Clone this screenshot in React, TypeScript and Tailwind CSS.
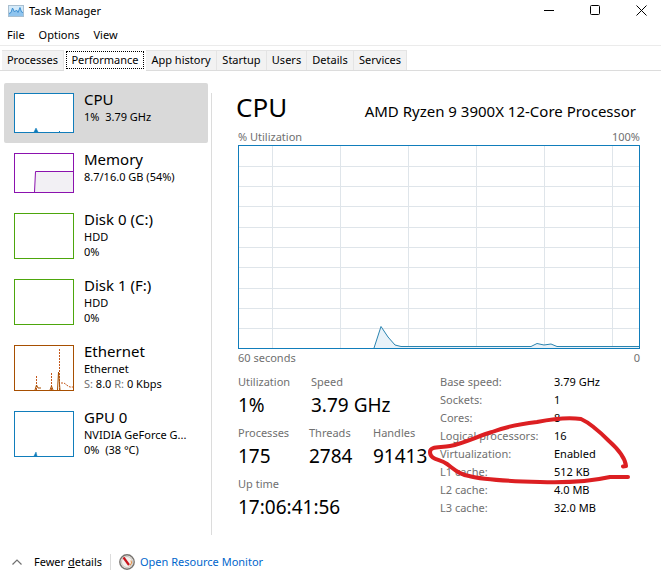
import type { ReactNode } from "react";

const tabs = [
    { name: "Processes", width: "w-[62px]" },
    { name: "Performance", width: "w-[82px]" },
    { name: "App history", width: "w-[71px]" },
    { name: "Startup", width: "w-[50px]" },
    { name: "Users", width: "w-[40px]" },
    { name: "Details", width: "w-[47px]" },
    { name: "Services", width: "w-[53px]" },
];

const details = [
    { label: "Base speed:", value: "3.79 GHz" },
    { label: "Sockets:", value: "1" },
    { label: "Cores:", value: "8" },
    { label: "Logical processors:", value: "16" },
    { label: "Virtualization:", value: "Enabled" },
    { label: "L1 cache:", value: "512 KB" },
    { label: "L2 cache:", value: "4.0 MB" },
    { label: "L3 cache:", value: "32.0 MB" },
];

type DeviceProps = {
    name: string;
    graph: ReactNode;
    border: string;
    tall?: boolean;
    selected?: boolean;
    children: ReactNode;
};

function Device({ name, graph, border, tall, selected, children }: DeviceProps) {
    return (
        <button
            type="button"
            className={`flex w-full items-start gap-2.5 rounded-xs pt-2.5 pl-2.5 text-left ${
                tall ? "h-[66px]" : "h-[60px]"
            } ${selected ? "bg-[#d9d9d9]" : ""}`}
        >
            <span
                className={`block w-[60px] shrink-0 border bg-white ${border} ${
                    tall ? "h-[46px]" : "h-10"
                }`}
            >
                {graph}
            </span>
            <span className="-mt-[3px] block min-w-0 text-[11px] leading-[15px]">
                <span className="block text-[15px] leading-[19px]">{name}</span>
                {children}
            </span>
        </button>
    );
}

function Stat({ label, value }: { label: string; value: string }) {
    return (
        <div>
            <dt className="text-[11px] leading-4 text-[#707070]">{label}</dt>
            <dd className="text-[19px] leading-[30px]">{value}</dd>
        </div>
    );
}

function AppIcon() {
    return (
        <svg width="16" height="12" viewBox="0 0 16 12">
            <rect x="0.5" y="0.5" width="15" height="11" fill="#d3eafa" stroke="#a9bfd0" />
            <path d="M1 8.500 3 7.500 4.500 3 6.500 7 8.500 5 10 7.500 12 2.500 13.500 7 15 7.500V11H1Z" fill="#8fc4ee" />
            <path d="M1 8.500 3 7.500 4.500 3 6.500 7 8.500 5 10 7.500 12 2.500 13.500 7 15 7.500" fill="none" stroke="#3d8fd1" />
        </svg>
    );
}

function UtilizationGraph() {
    return (
        <svg
            className="block h-[204px] w-full"
            viewBox="0 0 402 204"
            preserveAspectRatio="none"
            role="img"
            aria-label="CPU utilization"
        >
            <g stroke="#dfe5ea" shapeRendering="crispEdges">
                {[34, 102, 170, 238, 306, 374].map((x) => (
                    <path key={x} d={`M${x + 0.5} 0V204`} />
                ))}
                {[21, 41, 61, 82, 102, 122, 143, 163, 183].map((y) => (
                    <path key={y} d={`M0 ${y + 0.5}H402`} />
                ))}
            </g>
            <path
                d="M136 203 143 181.500 150 192 157 200 163 201.500H293L299 198.500 306 200 313 199 319 201.500H402V204H136Z"
                fill="#e8f2f9"
                stroke="#2a84b0"
            />
            <rect x="0.5" y="0.5" width="401" height="203" fill="none" stroke="#117dbb" />
        </svg>
    );
}

export default function App() {
    return (
        <div className="flex min-h-screen flex-col bg-white font-['Noto_Sans','Open_Sans',sans-serif] text-black">
            <header className="flex h-[26px] items-start justify-between">
                <h1 className="flex items-center gap-[5px] pl-2 text-[11px] leading-[21px]">
                    <AppIcon />
                    Task Manager
                </h1>
                <div className="flex">
                    <button type="button" aria-label="Minimize" className="flex h-5 w-[46px] items-center justify-center">
                        <svg width="11" height="11" viewBox="0 0 11 11">
                            <path d="M0 5.500H10" stroke="#000" />
                        </svg>
                    </button>
                    <button type="button" aria-label="Maximize" className="flex h-5 w-[46px] items-center justify-center">
                        <svg width="10" height="10" viewBox="0 0 10 10">
                            <rect x="0.5" y="0.5" width="9" height="9" rx="1" fill="none" stroke="#000" />
                        </svg>
                    </button>
                    <button type="button" aria-label="Close" className="flex h-5 w-[43px] items-center justify-center pl-1">
                        <svg width="11" height="11" viewBox="0 0 11 11">
                            <path d="M0.500 0.500 10.500 10.500M10.500 0.500 0.500 10.500" stroke="#000" />
                        </svg>
                    </button>
                </div>
            </header>

            <nav className="flex h-5 items-center gap-3.5 border-b border-[#ebebeb] pl-[7px] text-[11px]">
                <button type="button">File</button>
                <button type="button">Options</button>
                <button type="button">View</button>
            </nav>

            <div role="tablist" className="flex h-[25px] items-end border-b border-[#dcdcdc] pl-0.5">
                {tabs.map((tab) =>
                    tab.name === "Performance" ? (
                        <button
                            key={tab.name}
                            type="button"
                            role="tab"
                            aria-selected="true"
                            className={`-mb-px h-[23px] bg-white p-0.5 text-[11px] ${tab.width}`}
                        >
                            <span className="block border border-dotted border-black leading-4">{tab.name}</span>
                        </button>
                    ) : (
                        <button
                            key={tab.name}
                            type="button"
                            role="tab"
                            aria-selected="false"
                            className={`h-5 border-t border-r border-[#e4e4e4] bg-[#f2f2f2] text-[11px] whitespace-nowrap ${tab.width}`}
                        >
                            {tab.name}
                        </button>
                    ),
                )}
            </div>

            <main className="flex pt-3">
                <aside className="w-[208px] shrink-0 pl-1">
                    <Device
                        name="CPU"
                        selected
                        border="border-[#117dbb]"
                        graph={
                            <svg width="58" height="38" viewBox="0 0 58 38">
                                <path d="M19 38 21 34 23 38Z" fill="#117dbb" stroke="#117dbb" strokeWidth="0.5" />
                                <path d="M44 37.500H45" stroke="#117dbb" />
                            </svg>
                        }
                    >
                        1%&nbsp; 3.79 GHz
                    </Device>
                    <Device
                        name="Memory"
                        border="border-[#8b12ae]"
                        graph={
                            <svg width="58" height="38" viewBox="0 0 58 38">
                                <path d="M19.500 38 20.500 17.500H58V38Z" fill="#f2f0f4" />
                                <path d="M19.500 38 20.500 17.500H58" fill="none" stroke="#8b12ae" />
                            </svg>
                        }
                    >
                        8.7/16.0 GB (54%)
                    </Device>
                    <Device name="Disk 0 (C:)" tall border="border-[#4da60c]" graph={null}>
                        <span className="block">HDD</span>
                        <span className="block">0%</span>
                    </Device>
                    <Device name="Disk 1 (F:)" tall border="border-[#4da60c]" graph={null}>
                        <span className="block">HDD</span>
                        <span className="block">0%</span>
                    </Device>
                    <Device
                        name="Ethernet"
                        tall
                        border="border-[#a74f01]"
                        graph={
                            <svg width="58" height="44" viewBox="0 0 58 44" fill="none" stroke="#c4581c">
                                <path d="M21.500 44V30M36.500 44V27M44.500 44V2" strokeDasharray="2 1" />
                                <path d="M46 37H49L53 40 55 41H58" strokeDasharray="2 1" />
                                <path d="M20 44 21.500 39 23 42H26M35 44 36.500 40 38 44M42.500 44 43.500 26 45 44" stroke="#a74f01" />
                            </svg>
                        }
                    >
                        <span className="block">Ethernet</span>
                        <span className="block">
                            <span className="text-[#707070]">S:</span> 8.0 <span className="text-[#707070]">R:</span> 0 Kbps
                        </span>
                    </Device>
                    <Device
                        name="GPU 0"
                        tall
                        border="border-[#117dbb]"
                        graph={
                            <svg width="58" height="44" viewBox="0 0 58 44">
                                <path d="M19 44 21 40 22 44Z" fill="#117dbb" stroke="#117dbb" strokeWidth="0.5" />
                            </svg>
                        }
                    >
                        <span className="block">NVIDIA GeForce G...</span>
                        <span className="block">0%&nbsp; (38 °C)</span>
                    </Device>
                </aside>

                <section className="mt-2.5 ml-[3px] h-[442px] min-w-0 flex-1 border-l border-[#dcdcdc] pr-[21px] pl-[26px]">
                    <div className="flex h-[35px] items-end justify-between pr-1">
                        <h2 className="-ml-0.5 self-start text-[26px] leading-7">CPU</h2>
                        <p className="text-[15px] leading-[34px] whitespace-nowrap">AMD Ryzen 9 3900X 12-Core Processor</p>
                    </div>
                    <div className="flex justify-between text-[11px] leading-[17px] text-[#707070]">
                        <span>% Utilization</span>
                        <span>100%</span>
                    </div>
                    <UtilizationGraph />
                    <div className="flex justify-between text-[11px] leading-[18px] text-[#707070]">
                        <span>60 seconds</span>
                        <span>0</span>
                    </div>

                    <div className="flex pt-1.5">
                        <dl className="flex w-[202px] shrink-0 flex-col gap-[5px] pt-px">
                            <div className="grid grid-cols-[73px_1fr]">
                                <Stat label="Utilization" value="1%" />
                                <Stat label="Speed" value="3.79 GHz" />
                            </div>
                            <div className="grid grid-cols-[71px_64px_1fr]">
                                <Stat label="Processes" value="175" />
                                <Stat label="Threads" value="2784" />
                                <Stat label="Handles" value="91413" />
                            </div>
                            <Stat label="Up time" value="17:06:41:56" />
                        </dl>

                        <div className="relative">
                            <table className="text-left text-[11px] leading-[18px]">
                                <tbody>
                                    {details.map((row) => (
                                        <tr key={row.label}>
                                            <th scope="row" className="w-[114px] p-0 font-normal text-[#707070]">
                                                {row.label}
                                            </th>
                                            <td className="p-0 whitespace-nowrap">{row.value}</td>
                                        </tr>
                                    ))}
                                </tbody>
                            </table>
                            {/* hand-drawn marker around the virtualization row */}
                            <svg
                                className="pointer-events-none absolute top-10 -left-3.5"
                                width="206"
                                height="74"
                                viewBox="426 413 206 74"
                                fill="none"
                                stroke="#dc1f22"
                                strokeWidth="4"
                                strokeLinecap="round"
                                strokeLinejoin="round"
                            >
                                <path d="M623 466.500 626 466C625 457 618 449 609 441C600 432 590 423 581 419C567 417 552 419 537 422C520 424 505 427 492 432C478 436 465 443 450 446C440 448 430 446 430 452C430 460 440 459 447 464C454 469 458 474 469 476C480 479 505 481 540 482C570 483 592 481 610 477L628 477" />
                            </svg>
                        </div>
                    </div>
                </section>
            </main>

            <footer className="flex h-[54px] items-center pl-3 text-[11px]">
                <button type="button" className="flex items-center gap-3">
                    <svg width="10" height="6" viewBox="0 0 10 6">
                        <path d="M0.500 5.500 5 1 9.500 5.500" fill="none" stroke="#707070" strokeWidth="1.200" />
                    </svg>
                    <span>
                        Fewer <u>d</u>etails
                    </span>
                </button>
                <a href="#resource-monitor" className="ml-2 flex items-center gap-[5px] border-l border-[#dcdcdc] pl-2 text-[#0066cc]">
                    <svg width="16" height="16" viewBox="0 0 16 16">
                        <circle cx="8" cy="8" r="7.200" fill="#f4f1ee" stroke="#77736f" strokeWidth="1.400" />
                        <circle cx="8" cy="8" r="5.500" fill="none" stroke="#c9c2bc" />
                        <path d="M4.500 3.500 10 11" stroke="#c8141c" strokeWidth="2.200" />
                        <path d="M12 6.500 12.500 9 11 11.500" fill="none" stroke="#e58a3c" />
                    </svg>
                    Open Resource Monitor
                </a>
            </footer>
        </div>
    );
}
